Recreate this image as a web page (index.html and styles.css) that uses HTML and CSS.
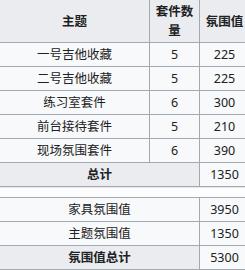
FILE: index.html
```html
<!DOCTYPE html>
<html lang="zh">
<head>
<meta charset="utf-8">
<link rel="stylesheet" href="styles.css">
</head>
<body>
<div class="frame">
<div class="wrap">
<table class="wikitable">
<colgroup><col class="c1"><col class="c2"><col class="c3"></colgroup>
<tr><th>主题</th><th>套件数量</th><th>氛围值</th></tr>
<tr><td>一号吉他收藏</td><td>5</td><td>225</td></tr>
<tr><td>二号吉他收藏</td><td>5</td><td>225</td></tr>
<tr><td>练习室套件</td><td>6</td><td>300</td></tr>
<tr><td>前台接待套件</td><td>5</td><td>210</td></tr>
<tr><td>现场氛围套件</td><td>6</td><td>390</td></tr>
<tr><th colspan="2">总计</th><td>1350</td></tr>
</table>
<div class="gap"></div>
<table class="wikitable">
<colgroup><col class="c1"><col class="c2"><col class="c3"></colgroup>
<tr><td colspan="2">家具氛围值</td><td>3950</td></tr>
<tr><td colspan="2">主题氛围值</td><td>1350</td></tr>
<tr><th colspan="2">氛围值总计</th><td>5300</td></tr>
</table>
</div>
</div>
</body>
</html>
```
FILE: styles.css
```css
html, body {
  margin: 0;
  padding: 0;
  background: #ffffff;
  overflow: hidden;
}
.frame {
  width: 245px;
  height: 270px;
  overflow: hidden;
}
.wrap {
  margin: -1px 0 0 -1px;
  width: 250px;
  font-family: "Noto Sans", "Noto Sans CJK SC", sans-serif;
  font-size: 12.5px;
  color: #202122;
}
.wikitable {
  border-collapse: collapse;
  table-layout: fixed;
  width: 250px;
  background: #f8f9fa;
}
.c1 { width: 150px; }
.c2 { width: 50px; }
.c3 { width: 50px; }
.wikitable th,
.wikitable td {
  border: 1px solid #a2a9b1;
  padding: 2px 4px;
  line-height: 19px;
  text-align: center;
}
.wikitable th {
  background: #eaecf0;
  font-weight: bold;
}
.gap {
  height: 10px;
  background: #fdfdfd;
  border-top: 1px solid #e6e7ea;
  box-sizing: border-box;
}
```
